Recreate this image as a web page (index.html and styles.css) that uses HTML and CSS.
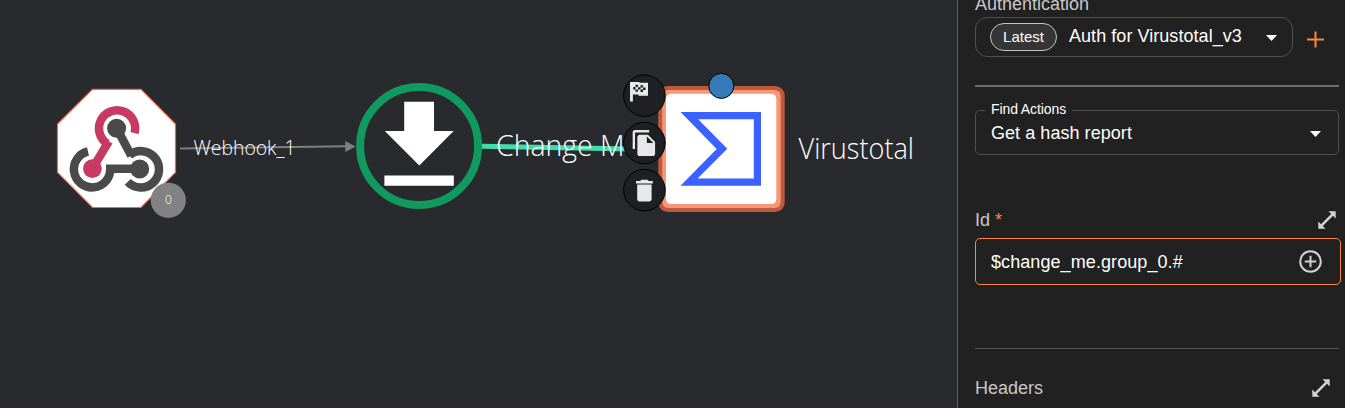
FILE: index.html
```html
<!DOCTYPE html>
<html lang="en">
<head>
<meta charset="utf-8">
<title>Workflow editor</title>
<link rel="stylesheet" href="styles.css">
</head>
<body>
<div class="app">
  <main class="canvas">
    <svg class="graph" width="957" height="408" viewBox="0 0 957 408">
      <!-- edges -->
      <path class="edge" d="M180 148.6L347 146.2"/>
      <path class="edge-arrow" d="M345.3 141v11l10.4-5.5z"/>
      <path class="edge-active" d="M482 146.2L660 149.6"/>

      <!-- webhook trigger -->
      <path class="octagon" d="M92.5 89.3h48.5l34.5 34.7v48.3l-34.5 35.2H92.5l-35-35.2V124z"/>
      <g class="hook">
        <path class="pink" d="M134.5 133.2A18.1 18.1 0 1 0 107.3 143.6"/>
        <path class="pink" d="M108.8 141.3L92.4 168.6"/>
        <path d="M88 151.5A18.2 18.2 0 1 0 110.3 168.7H139.6"/>
        <path d="M116.7 128.3L131.3 155.8"/>
        <path d="M129.3 155.2A18.2 18.2 0 1 1 127.7 181.9"/>
      </g>
      <circle class="dot-pink" cx="92.4" cy="168.6" r="9.4"/>
      <circle class="dot" cx="116.6" cy="128.3" r="9.5"/>
      <circle class="dot" cx="139.7" cy="169" r="9.5"/>
      <circle class="badge" cx="168.3" cy="200.3" r="17.6"/>
      <text class="badge-text" x="168.4" y="204.4">0</text>
      <text class="label small" x="193.5" y="155" textLength="102" lengthAdjust="spacingAndGlyphs">Webhook_1</text>

      <!-- change me -->
      <circle class="ring" cx="419.1" cy="146" r="59"/>
      <path class="white" d="M404.2 101.8H434V131h19.7L419.3 165.6 384.8 131h19.4zM384.4 175.5h69.4v10.2h-69.4z"/>
      <text class="label" x="496" y="156" textLength="128.5" lengthAdjust="spacingAndGlyphs">Change M</text>

      <!-- virustotal -->
      <rect class="node-outer" x="658.3" y="86" width="126.4" height="126" rx="9.5"/>
      <rect class="node-mid" x="662.3" y="90" width="118.4" height="118" rx="6"/>
      <rect class="white" x="666" y="93.8" width="110.3" height="110.3" rx="5"/>
      <path class="vt" fill-rule="evenodd" d="M680.5 112H761v73.8h-80.5L716.7 149zM698.2 119.2L727.3 148.7 697.6 178.4h56.2v-59.2z"/>
      <circle class="handle" cx="721.3" cy="85.9" r="12.5"/>
      <text class="label" x="798.5" y="158.7" textLength="115.5" lengthAdjust="spacingAndGlyphs">Virustotal</text>

      <!-- node actions -->
      <circle class="action" cx="644.4" cy="95.6" r="20.8"/>
      <circle class="action" cx="644.4" cy="143" r="20.8"/>
      <circle class="action" cx="644.4" cy="190.1" r="20.8"/>
      <g class="icon">
        <path d="M630 82h9.500v.8h8.500v13h-9.500v-1.400h-5.600v7H630z"/>
        <path class="cut" d="M635.500 84.800h2.500v2.300h-2.500zM640.500 85.300h2.500v2.300h-2.500zM633.200 87.100h2.300v2.300h-2.300zM638 87.300h2.500v2.300h-2.500zM643 87.600h2.500v2.300h-2.500zM635.500 89.400h2.500v2.300h-2.500zM640.500 89.600h2.500v2.300h-2.500z"/>
        <path transform="translate(630.3 128.9) scale(1.18)" d="M16 1H4c-1.1 0-2 .9-2 2v14h2V3h12V1zm-1 4l6 6v10c0 1.1-.9 2-2 2H7.99C6.89 23 6 22.1 6 21V7c0-1.1.89-2 1.99-2h7zm-1 7h5.500L14 6.500V12z"/>
        <path transform="translate(630 176.200) scale(1.2)" d="M6 19c0 1.100.9 2 2 2h8c1.100 0 2-.9 2-2V7H6v12zM19 4h-3.500l-1-1h-5l-1 1H5v2h14V4z"/>
      </g>
    </svg>
  </main>

  <aside class="panel">
    <div class="title">Authentication</div>
    <div class="auth-row">
      <div class="select auth">
        <span class="chip">Latest</span>
        <span class="value">Auth for Virustotal_v3</span>
        <svg class="caret" width="11" height="6" viewBox="0 0 11 6"><path d="M0 0h11L5.500 6z"/></svg>
      </div>
      <svg class="plus" width="17" height="17" viewBox="0 0 17 17"><path d="M0 8.500h17M8.500 .5v16"/></svg>
    </div>
    <div class="divider thick"></div>
    <fieldset class="select actions">
      <legend>Find Actions</legend>
      <span class="value">Get a hash report</span>
      <svg class="caret" width="11" height="6" viewBox="0 0 11 6"><path d="M0 0h11L5.500 6z"/></svg>
    </fieldset>
    <div class="field-head">
      <span>Id <span class="star">*</span></span>
      <svg class="expand" width="18" height="18" viewBox="0 0 18 18"><path d="M10.500 .3h7.200v7.200l-2.700-2.700L4.800 15l2.700 2.700H.3v-7.200L3 13.200 13.200 3z"/></svg>
    </div>
    <div class="input">
      <span>$change_me.group_0.#</span>
      <svg class="add" width="23" height="23" viewBox="0 0 23 23"><circle cx="11.500" cy="11.500" r="10.300"/><path d="M5.800 11.500h11.400M11.500 5.800v11.400"/></svg>
    </div>
    <div class="divider"></div>
    <div class="field-head headers">
      <span>Headers</span>
      <svg class="expand" width="18" height="18" viewBox="0 0 18 18"><path d="M10.500 .3h7.200v7.200l-2.700-2.700L4.800 15l2.700 2.700H.3v-7.200L3 13.200 13.200 3z"/></svg>
    </div>
  </aside>
</div>
</body>
</html>
```

FILE: styles.css
```css
* { box-sizing: border-box; }
body { margin: 0; overflow: hidden; background: #212121; }
.app { display: flex; width: 1345px; height: 408px; overflow: hidden; }
.canvas { width: 957px; flex: none; background: #282a2e; }
svg { display: block; flex: none; }

.edge { stroke: #808080; stroke-width: 2; fill: none; }
.edge-arrow { fill: #808080; }
.edge-active { stroke: #41dcab; stroke-width: 5; fill: none; }
.octagon { fill: #fff; stroke: #ff6242; stroke-width: 1.2; }
.hook path { fill: none; stroke: #4a4a4a; stroke-width: 8.5; }
.hook .pink { stroke: #c73a63; }
.dot { fill: #4a4a4a; }
.dot-pink { fill: #c73a63; }
.badge { fill: #828282; }
.badge-text { font: 300 12px "Open Sans", sans-serif; fill: #fff; text-anchor: middle; }
.label { font: 300 30px "Open Sans", sans-serif; fill: #fff; }
.label.small { font-size: 20.5px; }
.ring { fill: none; stroke: #109a5d; stroke-width: 8; }
.white { fill: #fff; }
.node-outer { fill: #be5a3d; }
.node-mid { fill: #f99678; }
.vt { fill: #3b61ff; }
.handle { fill: #337ab7; stroke: #000; stroke-width: 1; }
.action { fill: #1f2023; stroke: #000; stroke-width: 1; }
.icon { fill: #e8e8e8; }
.icon .cut { fill: #1f2023; }

.panel {
  flex: 1;
  min-width: 0;
  padding-left: 17px;
  border-left: 1px solid #5a5d61;
  background: #212121;
  color: #fff;
  font: 18px/20px "Liberation Sans", Arial, sans-serif;
}
.title { height: 17px; margin-top: -6px; color: #c8c8c8; }
.auth-row { display: flex; align-items: center; gap: 14px; margin-top: 6px; }
.select { display: flex; align-items: center; border: 1px solid #505050; }
.auth { width: 318px; height: 40px; border-radius: 12px; padding: 0 15px 0 14px; }
.chip {
  width: 67px;
  height: 28px;
  margin-right: 12px;
  border: 1px solid #c4c4c4;
  border-radius: 14px;
  background: #353535;
  font-size: 15px;
  line-height: 26px;
  text-align: center;
}
.auth .value { margin-top: -2px; letter-spacing: 0.05px; }
.caret { margin-left: auto; fill: #fff; }
.auth .caret { margin-top: 1px; }
.plus { margin-top: 5px; fill: none; stroke: #ff8544; stroke-width: 2; }
.divider { width: 364px; height: 1px; background: #555; }
.divider.thick { height: 2px; margin-top: 28px; background: #6b6d71; }
.actions {
  width: 364px;
  height: 53px;
  margin: 15px 0 0;
  padding: 0 17px 0 15px;
  border-radius: 5px;
}
.actions .value { margin-top: -6px; letter-spacing: 0.05px; }
.actions .caret { margin-top: -5px; }
.actions legend { margin-left: -6px; padding: 0 6px; height: 16px; font-size: 14px; line-height: 14px; letter-spacing: -0.1px; }
.field-head {
  display: flex;
  justify-content: space-between;
  align-items: center;
  width: 361px;
  margin-top: 55px;
  color: #c8c8c8;
}
.star { color: #ff8544; }
.input {
  display: flex;
  align-items: center;
  justify-content: space-between;
  width: 366px;
  height: 47px;
  margin: 8px 0 63px;
  padding: 0 18px 0 15px;
  border: 1px solid #ff8544;
  border-radius: 5px;
}
.input span { letter-spacing: 0.08px; }
.expand { fill: #d2d2d2; }
.add { fill: none; stroke: #d2d2d2; stroke-width: 2; }
.headers { width: 355px; margin-top: 29px; }
```
